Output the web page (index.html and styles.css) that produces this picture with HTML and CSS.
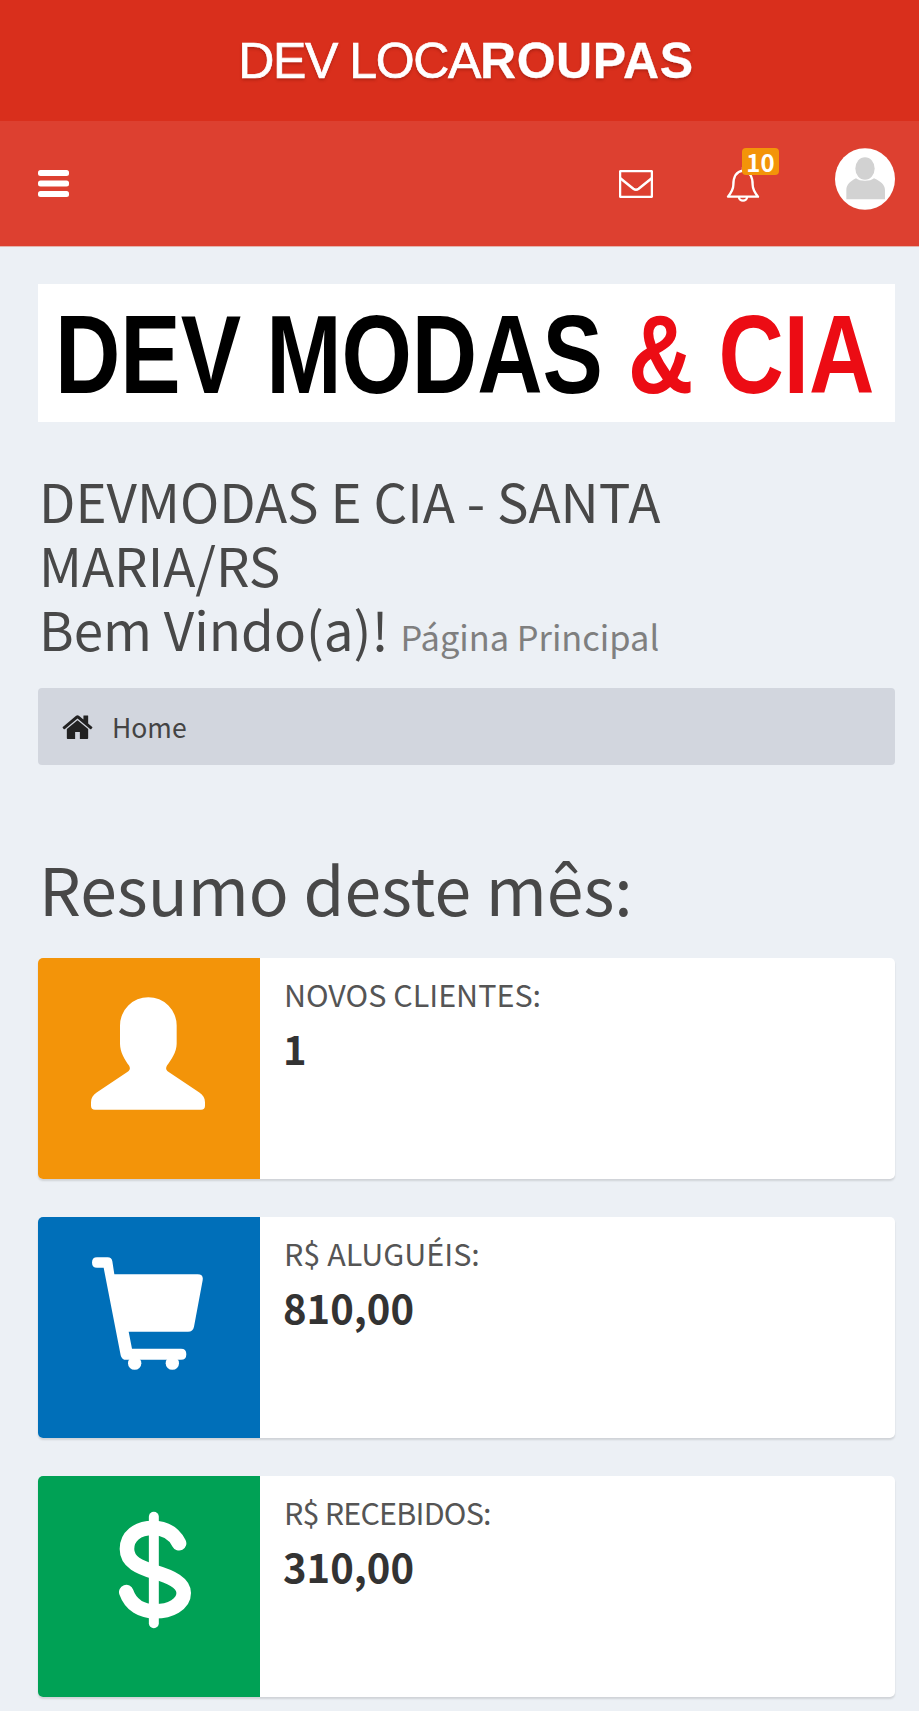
FILE: index.html
```html
<!DOCTYPE html>
<html lang="pt-BR">
<head>
<meta charset="utf-8">
<title>Dev Locaroupas</title>
<link rel="stylesheet" href="styles.css">
</head>
<body>
<header class="logo-bar"><span class="logo">DEV LOCA<b>ROUPAS</b></span></header>
<nav class="navbar">
  <svg class="bars" viewBox="0 0 31 27" aria-hidden="true"><rect width="31" height="6" rx="2.5"/><rect y="10.5" width="31" height="6" rx="2.5"/><rect y="21" width="31" height="6" rx="2.5"/></svg>
  <div class="nav-right">
    <svg class="mail" viewBox="57 122 102 84" aria-hidden="true"><rect x="60" y="125" width="96" height="78" rx="4"/><path d="M60 146 L100 178 Q108 184 116 178 L156 146"/></svg>
    <div class="bell-wrap">
      <svg class="bell" viewBox="380 108 102 108" aria-hidden="true"><path d="M431 112 V122 C408 125 402 146 402 165 C402 180 394 190 386 200 H476 C468 190 460 180 460 165 C460 146 454 125 431 122"/><path d="M419 202 a12 10 0 0 0 24 0"/></svg>
      <span class="badge">10</span>
    </div>
    <svg class="avatar" viewBox="705 52 180 185" aria-hidden="true"><ellipse class="avatar-bg" cx="795" cy="144.500" rx="90" ry="92.500"/><ellipse class="avatar-fg" cx="795" cy="113" rx="29" ry="34"/><path class="avatar-fg" d="M739 205 V178 C739 160 752 150 768 142 C778 152 812 152 822 142 C840 150 855 160 855 178 V205 Z"/></svg>
  </div>
</nav>
<main class="content">
  <div class="banner"><span class="banner-text">DEV MODAS <em>&amp; CIA</em></span></div>
  <h1 class="page-title">DEVMODAS E CIA - SANTA MARIA/RS<br>Bem Vindo(a)! <small>Página Principal</small></h1>
  <div class="breadcrumb">
    <svg class="home" viewBox="80 180 1632 1350" aria-hidden="true"><path d="M1472 992v480q0 26-19 45t-45 19h-384v-384h-256v384h-384q-26 0-45-19t-19-45v-480q0-1 .5-3t.5-3l575-474 575 474q1 2 1 6zm223-69l-62 74q-8 9-21 11h-3q-13 0-21-7l-692-577-692 577q-12 8-24 7-13-2-21-11l-62-74q-8-10-7-23.5t11-21.5l719-599q32-26 76-26t76 26l244 204v-195q0-14 9-23t23-9h192q14 0 23 9t9 23v408l219 182q10 8 11 21.5t-7 23.5z"/></svg>
    <span>Home</span>
  </div>
  <h2 class="section-title">Resumo deste mês:</h2>
  <section class="card">
    <div class="card-icon orange">
      <svg class="icon-user" viewBox="0 0 342 338" aria-hidden="true"><path d="M87 85 A85 85 0 0 1 257 85 V140 C257 165 240 190 228 205 C224 212 224 218 232 224 L325 286 C336 293 342 303 342 315 V326 Q342 338 330 338 H12 Q0 338 0 326 V315 C0 303 6 293 17 286 L110 224 C118 218 118 212 114 205 C102 190 87 165 87 140 Z"/></svg>
    </div>
    <div class="card-body"><span class="card-label">NOVOS CLIENTES:</span><span class="card-value">1</span></div>
  </section>
  <section class="card">
    <div class="card-icon blue">
      <svg class="icon-cart" viewBox="217 172 333 338" aria-hidden="true"><path d="M232 172 H264 Q276 172 278 184 L284 223 H534 Q552 223 549 241 L523 381 Q520 396 505 396 H327 L337 447 H484 Q500 447 500 463 Q500 480 484 480 H320 Q306 480 303 466 L252 204 H232 Q217 204 217 188 Q217 172 232 172 Z"/><circle cx="345" cy="490" r="20"/><circle cx="458" cy="490" r="20"/></svg>
    </div>
    <div class="card-body"><span class="card-label">R$ ALUGUÉIS:</span><span class="card-value">810,00</span></div>
  </section>
  <section class="card">
    <div class="card-icon green">
      <svg class="icon-dollar" viewBox="296 152 217 353" aria-hidden="true"><path class="dollar-bar" d="M401 168 V489"/><path class="dollar-s" d="M477 248 C460 215 430 202 398 202 C350 202 320 228 320 265 C320 305 358 320 405 335 C455 350 491 368 491 398 C491 432 450 453 405 453 C365 453 332 435 318 395"/></svg>
    </div>
    <div class="card-body"><span class="card-label card-label-tight">R$ RECEBIDOS:</span><span class="card-value">310,00</span></div>
  </section>
</main>
</body>
</html>
```
FILE: styles.css
```css
* { box-sizing: border-box; }
html, body { margin: 0; padding: 0; }
body {
  background: #ecf0f5;
  color: #444;
  font-family: "Noto Sans CJK SC", "Noto Sans", sans-serif;
  height: 1711px;
  overflow: hidden;
}
.logo-bar {
  height: 121px;
  background: #d92f1c;
  display: flex;
  align-items: center;
  justify-content: center;
  padding-left: 13px;
}
.logo {
  font-family: "Liberation Sans", Arial, sans-serif;
  font-size: 50px;
  line-height: 1;
  letter-spacing: -1.4px;
  color: #fff;
  -webkit-text-stroke: .7px #fff;
  text-shadow: 0 2px 3px rgba(120, 20, 10, .45);
}
.logo b { font-weight: 700; letter-spacing: .6px; -webkit-text-stroke: .3px #fff; }
.navbar {
  height: 126px;
  background: #dd4030;
  border-bottom: 1px solid #e4b3ac;
  display: flex;
  align-items: center;
  justify-content: space-between;
  padding: 0 24px 0 38px;
}
.bars { width: 31px; height: 27px; fill: #fff; }
.nav-right { display: flex; align-items: center; }
.mail { width: 34px; height: 28px; fill: none; stroke: #fff; stroke-width: 7.5; margin-right: 73px; }
.bell-wrap { position: relative; display: flex; margin-right: 75px; }
.bell { width: 34px; height: 36px; fill: none; stroke: #fff; stroke-width: 7; stroke-linejoin: round; stroke-linecap: round; }
.badge {
  position: absolute;
  left: 16px;
  top: -18px;
  width: 37px;
  height: 27px;
  border-radius: 4px;
  background: #f39409;
  color: #fff;
  font-size: 24px;
  font-weight: 700;
  line-height: 27px;
  text-align: center;
}
.avatar { width: 60px; height: 62px; margin-bottom: 10px; }
.avatar-bg { fill: #fff; }
.avatar-fg { fill: #d2d2d2; }
.content { padding: 37px 24px 0 38px; }
.banner {
  height: 138px;
  background: #fff;
  display: flex;
  align-items: center;
  justify-content: center;
  overflow: hidden;
  padding: 4px 4px 0 0;
}
.banner-text {
  font-family: "Liberation Sans", Arial, sans-serif;
  font-weight: 700;
  font-size: 111px;
  line-height: 1;
  color: #000;
  white-space: nowrap;
  transform: scaleX(.815);
}
.banner-text em { font-style: normal; color: #ec0c14; }
.page-title {
  margin: 46px 0 0 1px;
  font-size: 52.9px;
  font-weight: 400;
  line-height: 64px;
  color: #484848;
}
.page-title small { font-size: 34.4px; color: #7f7f7f; }
.breadcrumb {
  margin-top: 20px;
  height: 77px;
  background: #d2d6de;
  border-radius: 4px;
  display: flex;
  align-items: center;
  padding-left: 24px;
  font-size: 26.5px;
  color: #444;
}
.home { width: 31px; height: 25px; fill: #222; margin-right: 19px; }
.section-title {
  margin: 90px 0 0 1px;
  font-size: 66px;
  font-weight: 400;
  line-height: 64px;
  color: #484848;
}
.card {
  margin-top: 38px;
  height: 221px;
  background: #fff;
  border-radius: 5px;
  box-shadow: 0 2px 2px rgba(0, 0, 0, .12);
  display: flex;
  overflow: hidden;
}
.section-title + .card { margin-top: 39px; }
.card-icon {
  width: 222px;
  flex: none;
  display: flex;
  align-items: flex-start;
  justify-content: center;
}
.orange { background: #f39409; }
.blue { background: #006fb9; }
.green { background: #00a155; }
.icon-user { width: 114px; height: 113px; fill: #fff; margin: 39px 2px 0 0; }
.icon-cart { width: 111px; height: 113px; fill: #fff; margin: 40px 3px 0 0; }
.icon-dollar { width: 72px; height: 118px; fill: none; stroke: #fff; margin: 35px 0 0 12px; }
.dollar-bar { stroke-width: 30; stroke-linecap: round; }
.dollar-s { stroke-width: 44; stroke-linecap: round; }
.card-body {
  padding: 15px 0 0 24px;
  display: flex;
  flex-direction: column;
}
.card-label { font-size: 30.5px; line-height: 42px; color: #555; }
.card-label-tight { letter-spacing: -.8px; }
.card-value { font-size: 40px; font-weight: 700; line-height: 56px; margin: 5px 0 0 -1px; color: #333; }
```
